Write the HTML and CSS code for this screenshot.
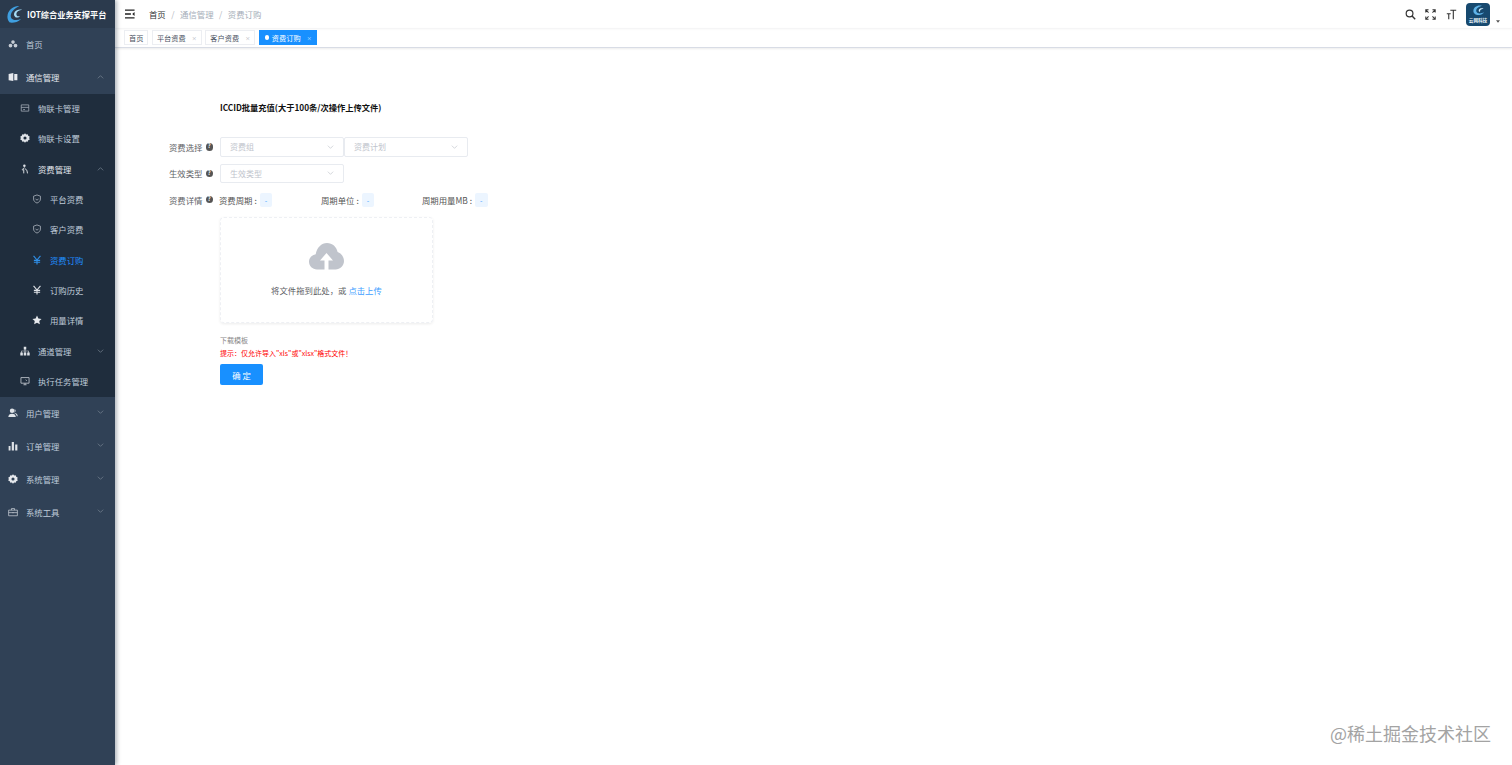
FILE: index.html
```html
<!DOCTYPE html>
<html lang="zh-CN">
<head>
  <meta charset="UTF-8" />
  <title>IOT综合业务支撑平台</title>
  <link rel="stylesheet" href="styles.css">
</head>
<body>
  <aside class="sidebar">
    <div class="brand">
      <svg class="brand-logo" viewBox="0 0 20 20" aria-hidden="true">
        <path d="M15 1.500C9.500 1 4 5 2.800 10.500c-.8 3.500.2 6.500 2.200 8.500 3.500.6 8.500-.3 12-3.800-3 1.300-6.800 1.800-9 .3C5.500 14 5.500 10.500 7.500 7.500 9.300 4.800 12 3 15 1.500z" fill="#3f9fe0"/>
        <path d="M18 5.500c-3-1-6.300.2-7.800 2.500-1.200 2-.9 4.300.8 5.300 1.700.9 3.700.3 4.800-1-1.500.4-3 .1-3.600-1.100-.7-1.600.3-3.300 1.800-4.300C15.200 6.200 16.500 5.700 18 5.500z" fill="#a5dcf7"/>
      </svg>
      <span class="brand-name">IOT综合业务支撑平台</span>
    </div>
    <nav class="menu">
      <a class="item">
        <svg class="ico" viewBox="0 0 16 16"><path d="M8 2a2.900 2.900 0 1 1 0 5.800A2.900 2.900 0 0 1 8 2zM4 7.500a3 3 0 1 1 0 6 3 3 0 0 1 0-6zm8 0a3 3 0 1 1 0 6 3 3 0 0 1 0-6z" fill="#c6ccd4"/></svg>
        <span>首页</span>
      </a>
      <a class="item strong">
        <svg class="ico" viewBox="0 0 16 16"><path d="M1 3 8.500 1.500v13L1 13zM10 3h5v10h-5z" fill="#e6e9ed"/></svg>
        <span>通信管理</span>
        <svg class="arrow" viewBox="0 0 10 6"><path d="M1 5l4-4 4 4"/></svg>
      </a>
      <div class="submenu">
        <a class="sub">
          <svg class="ico" viewBox="0 0 16 16"><path d="M2 3h12v10H2zM2 7h12M5 10.500h3" fill="none" stroke="#aab2bc" stroke-width="1.200"/></svg>
          <span>物联卡管理</span>
        </a>
        <a class="sub">
          <svg class="ico" viewBox="0 0 16 16"><path fill-rule="evenodd" d="M8 .500l1.800 2 2.500-.5.800 2.400 2.400 1L14.800 8l.7 2.600-2.400 1-.8 2.400-2.500-.5-1.800 2-1.800-2-2.500.5-.8-2.400-2.400-1L1.200 8 .500 5.400l2.400-1L3.700 2l2.500.5zM8 5.500a2.500 2.500 0 1 0 0 5 2.500 2.500 0 0 0 0-5z" fill="#dfe3e8"/></svg>
          <span>物联卡设置</span>
        </a>
        <a class="sub strong">
          <svg class="ico" viewBox="0 0 16 16"><circle cx="7" cy="2.800" r="2" fill="#dfe3e8"/><path d="M7 5.500 3.500 9l1.200 1L6 8.800V15M7.500 7l3.500 3 1 5" fill="none" stroke="#dfe3e8" stroke-width="1.500"/></svg>
          <span>资费管理</span>
          <svg class="arrow" viewBox="0 0 10 6"><path d="M1 5l4-4 4 4"/></svg>
        </a>
        <a class="sub deep">
          <svg class="ico" viewBox="0 0 16 16"><path d="M8 1.500l5.500 2v4.500c0 3-2.400 5.300-5.500 6.500-3.100-1.200-5.500-3.500-5.500-6.500V3.500zM5.500 7.500 8 10l2.500-2.500" fill="none" stroke="#b5bcc5" stroke-width="1.200"/></svg>
          <span>平台资费</span>
        </a>
        <a class="sub deep">
          <svg class="ico" viewBox="0 0 16 16"><path d="M8 1.500l5.500 2v4.500c0 3-2.400 5.300-5.500 6.500-3.100-1.200-5.500-3.500-5.500-6.500V3.500zM5.500 7.500 8 10l2.500-2.500" fill="none" stroke="#b5bcc5" stroke-width="1.200"/></svg>
          <span>客户资费</span>
        </a>
        <a class="sub deep active">
          <svg class="ico" viewBox="0 0 16 16"><path d="M2.500 1.500 8 8l5.500-6.500M3 8.500h10M3 11.500h10M8 8v7" fill="none" stroke="#2f8fe8" stroke-width="1.800"/></svg>
          <span>资费订购</span>
        </a>
        <a class="sub deep">
          <svg class="ico" viewBox="0 0 16 16"><path d="M2.500 1.500 8 8l5.500-6.500M3 8.500h10M3 11.500h10M8 8v7" fill="none" stroke="#dfe3e8" stroke-width="1.800"/></svg>
          <span>订购历史</span>
        </a>
        <a class="sub deep">
          <svg class="ico" viewBox="0 0 16 16"><path d="M8 .800l2.200 4.700 5.100.7-3.700 3.500 1 5.100L8 12.300l-4.600 2.500 1-5.100L.700 6.200l5.100-.7z" fill="#e6e9ed"/></svg>
          <span>用量详情</span>
        </a>
        <a class="sub">
          <svg class="ico" viewBox="0 0 16 16"><path d="M6 1h4v4.500H8.600v2H14v3h1.500V15h-4v-4.500H13v-2H8.600v2H10V15H6v-4.500h1.400v-2H3v2h1.500V15h-4v-4.500H2v-3h5.400v-2H6z" fill="#dfe3e8"/></svg>
          <span>通道管理</span>
          <svg class="arrow" viewBox="0 0 10 6"><path d="M1 1l4 4 4-4"/></svg>
        </a>
        <a class="sub">
          <svg class="ico" viewBox="0 0 16 16"><path d="M1.500 2.500h13v9h-13zM5.500 14h5M8 11.500V14M9 6l2 1.500" fill="none" stroke="#c6ccd4" stroke-width="1.300"/></svg>
          <span>执行任务管理</span>
        </a>
      </div>
      <a class="item">
        <svg class="ico" viewBox="0 0 16 16"><circle cx="6.500" cy="4.500" r="3.600" fill="#dfe3e8"/><path d="M.500 14.500c0-3.800 2.500-5.500 6-5.500s6 1.700 6 5.500zM10.500 1.500a3.500 3.500 0 0 1 0 6c2.500.6 5 2.200 5 5.500H14c-.3-2-1.500-3.500-3.500-4.500z" fill="#dfe3e8"/></svg>
        <span>用户管理</span>
        <svg class="arrow" viewBox="0 0 10 6"><path d="M1 1l4 4 4-4"/></svg>
      </a>
      <a class="item">
        <svg class="ico" viewBox="0 0 16 16"><path d="M1 8h3v7H1zM6 1.500h3.500V15H6zM11.500 5.500H15V15h-3.500z" fill="#dfe3e8"/></svg>
        <span>订单管理</span>
        <svg class="arrow" viewBox="0 0 10 6"><path d="M1 1l4 4 4-4"/></svg>
      </a>
      <a class="item">
        <svg class="ico" viewBox="0 0 16 16"><path fill-rule="evenodd" d="M8 .500l1.800 2 2.500-.5.800 2.400 2.400 1L14.800 8l.7 2.600-2.400 1-.8 2.400-2.500-.5-1.800 2-1.800-2-2.500.5-.8-2.400-2.400-1L1.200 8 .500 5.400l2.400-1L3.700 2l2.500.5zM8 5.500a2.500 2.500 0 1 0 0 5 2.500 2.500 0 0 0 0-5z" fill="#e6e9ed"/></svg>
        <span>系统管理</span>
        <svg class="arrow" viewBox="0 0 10 6"><path d="M1 1l4 4 4-4"/></svg>
      </a>
      <a class="item">
        <svg class="ico" viewBox="0 0 16 16"><path d="M1 5h14v9H1zM5.500 5V2.500h5V5M1 9h14M8 8v2" fill="none" stroke="#c6ccd4" stroke-width="1.200"/></svg>
        <span>系统工具</span>
        <svg class="arrow" viewBox="0 0 10 6"><path d="M1 1l4 4 4-4"/></svg>
      </a>
    </nav>
  </aside>

  <div class="main">
    <header class="navbar">
      <svg class="hamburger" viewBox="0 0 11 10"><path d="M0 .8h10.500M0 5h6.500M0 9.200h10.500" fill="none" stroke="#222" stroke-width="1.400"/><path d="M10.500 2.800v4.400L8 5z" fill="#222"/></svg>
      <div class="crumbs">
        <span class="crumb-home">首页</span>
        <span class="sep">/</span>
        <span>通信管理</span>
        <span class="sep">/</span>
        <span>资费订购</span>
      </div>
      <div class="tools">
        <svg class="tool" viewBox="0 0 14 14"><circle cx="5.800" cy="5.800" r="4.300" fill="none" stroke="#333" stroke-width="1.500"/><path d="M9 9l4 4" stroke="#333" stroke-width="1.800"/></svg>
        <svg class="tool" viewBox="0 0 14 14"><path d="M1 4.500V1h3.500M9.500 1H13v3.500M13 9.500V13H9.500M4.500 13H1V9.500M1.500 1.500l3 3M12.500 1.500l-3 3M12.500 12.500l-3-3M1.500 12.500l3-3" fill="none" stroke="#333" stroke-width="1.300"/></svg>
        <svg class="tool" viewBox="0 0 14 14"><path d="M5.500 1.500H13M9.300 1.500V13M1 6h5M3.500 6v7" fill="none" stroke="#333" stroke-width="1.400"/></svg>
        <div class="avatar">
          <svg class="avatar-swirl" viewBox="0 0 20 14"><path d="M14 1.500C9 0 4 3 4 7.500c0 3.500 4 5.500 8 4.500 2-.5 3.500-1.500 4.500-3-2.500 1.500-6 2-8 .5C6.500 8 7 5 9.500 3.500 11 2.500 12.500 2 14 1.500z" fill="#5fb4ea"/><path d="M16 5c-2-1-4.500-.5-5.500 1-.7 1.200 0 2.500 1.500 2.500-.5-1 0-2 1-2.700.8-.5 2-.8 3-.8z" fill="#cfeaf9"/></svg>
          <span class="avatar-name">云网科技</span>
        </div>
        <svg class="caret" viewBox="0 0 6 4"><path d="M0 0h6L3 4z" fill="#555"/></svg>
      </div>
    </header>

    <div class="tabs">
      <a class="tab">首页</a>
      <a class="tab">平台资费<i>×</i></a>
      <a class="tab">客户资费<i>×</i></a>
      <a class="tab current"><b class="dot"></b>资费订购<i>×</i></a>
    </div>

    <main class="content">
      <h3 class="title">ICCID批量充值(大于100条/次操作上传文件)</h3>

      <div class="row">
        <label class="row-label">资费选择<b class="help">?</b></label>
        <div class="select"><span>资费组</span><svg viewBox="0 0 10 6"><path d="M1 1l4 4 4-4"/></svg></div>
        <div class="select"><span>资费计划</span><svg viewBox="0 0 10 6"><path d="M1 1l4 4 4-4"/></svg></div>
      </div>
      <div class="row row-last">
        <label class="row-label">生效类型<b class="help">?</b></label>
        <div class="select"><span>生效类型</span><svg viewBox="0 0 10 6"><path d="M1 1l4 4 4-4"/></svg></div>
      </div>
      <div class="row row-detail">
        <label class="row-label">资费详情<b class="help">?</b></label>
        <div class="detail detail-a"><span>资费周期 :</span><em>-</em></div>
        <div class="detail detail-b"><span>周期单位 :</span><em>-</em></div>
        <div class="detail"><span>周期用量MB :</span><em>-</em></div>
      </div>

      <div class="upload">
        <svg class="cloud" viewBox="0 0 35 27"><path d="M8 26.500C3.500 26.500 0 23 0 18.800c0-3.900 2.900-7 6.700-7.600C7.700 4.800 12.500 0 18 0c5.300 0 9.700 3.900 10.600 9 3.700 1.200 6.400 5 6.400 9 0 4.800-3.800 8.500-8.500 8.500h-7V17.500h4.500L17.500 10 11 17.500h4.500v9z" fill="#c0c4cc"/></svg>
        <p class="upload-text">将文件拖到此处，或 <a>点击上传</a></p>
      </div>

      <a class="template">下载模板</a>
      <p class="hint">提示：仅允许导入"xls"或"xlsx"格式文件！</p>
      <button class="confirm" type="button">确 定</button>
    </main>
  </div>

  <div class="watermark">@稀土掘金技术社区</div>
</body>
</html>
```

FILE: styles.css
```css
* {
  box-sizing: border-box;
}
html, body {
  height: 100%;
}
body {
  margin: 0;
  display: flex;
  overflow: hidden;
  background: #fff;
  font-family: "Noto Sans CJK SC", "Noto Sans", sans-serif;
  font-size: 8.4px;
  color: #606266;
}

/* sidebar */
.sidebar {
  width: 115px;
  flex-shrink: 0;
  background: #304156;
  box-shadow: 2px 0 4px rgba(0, 21, 41, 0.3);
  position: relative;
  z-index: 2;
  color: #bfcbd9;
}
.brand {
  height: 28px;
  display: flex;
  align-items: center;
  padding-left: 5px;
  gap: 3px;
  background: #2b3a4d;
}
.brand-logo {
  width: 19px;
  height: 20px;
  flex-shrink: 0;
}
.brand-name {
  color: #fff;
  font-size: 8.200px;
  font-weight: 700;
  white-space: nowrap;
}
.item, .sub {
  display: flex;
  align-items: center;
  position: relative;
  white-space: nowrap;
}
.item {
  height: 33px;
  padding: 0 0 1px 8px;
}
.sub {
  height: 30.3px;
  padding: 0 0 2px 20px;
}
.sub.deep {
  padding-left: 32px;
}
.item span, .sub span {
  margin-left: 8px;
}
.strong {
  color: #e4e8ed;
}
.active {
  color: #1f8fff;
}
.submenu {
  background: #1f2d3d;
}
.ico {
  width: 10px;
  height: 10px;
  flex-shrink: 0;
}
.arrow {
  position: absolute;
  right: 11px;
  top: 50%;
  width: 7px;
  height: 4px;
  margin-top: -3px;
  fill: none;
  stroke: #7f8b99;
  stroke-width: 1;
}

/* top bar */
.main {
  flex: 1;
  min-width: 0;
  display: flex;
  flex-direction: column;
}
.navbar {
  height: 28px;
  display: flex;
  align-items: center;
  padding-left: 10px;
  box-shadow: 0 1px 2px rgba(0, 21, 41, 0.06);
}
.hamburger {
  width: 10px;
  height: 10px;
}
.crumbs {
  margin-left: 14px;
  display: flex;
  gap: 5.500px;
  color: #a5adb8;
  font-size: 8.400px;
}
.crumb-home {
  color: #303133;
}
.sep {
  color: #b4b9c2;
}
.tools {
  margin-left: auto;
  display: flex;
  align-items: center;
  padding-right: 12px;
}
.tool {
  width: 11px;
  height: 11px;
  margin-right: 9.500px;
}
.avatar {
  width: 24px;
  height: 23px;
  border-radius: 4px;
  background: #17496f;
  display: flex;
  flex-direction: column;
  align-items: center;
}
.avatar-swirl {
  width: 17px;
  height: 13px;
  margin-top: 1px;
}
.avatar-name {
  font-size: 4.600px;
  line-height: 6px;
  color: #e8f1f7;
  font-weight: 700;
}
.caret {
  width: 4px;
  height: 3px;
  margin: 14px 0 0 6px;
}

/* tabs */
.tabs {
  height: 20px;
  display: flex;
  gap: 3.500px;
  padding: 2px 0 0 9px;
  border-bottom: 1px solid #d8dce5;
  box-shadow: 0 1px 2px rgba(0, 0, 0, 0.08);
}
.tab {
  height: 15px;
  padding: 0 4px;
  display: flex;
  align-items: center;
  border: 1px solid #eceef2;
  background: #fff;
  color: #495060;
  font-size: 7.200px;
}
.tab i {
  margin-left: 6.200px;
  font-style: normal;
  font-size: 5px;
  color: #a0a6b0;
}
.tab.current {
  background: #1890ff;
  border-color: #1890ff;
  color: #fff;
  padding-left: 5px;
}
.tab.current i {
  color: #dcecff;
}
.dot {
  width: 4.500px;
  height: 4.500px;
  margin-right: 2.500px;
  border-radius: 50%;
  background: #fff;
}

/* form */
.content {
  padding: 53px 0 0 105px;
}
.title {
  margin: 0 0 24px;
  font-size: 8.250px;
  line-height: 12px;
  font-weight: 700;
  color: #111;
}
.row {
  display: flex;
  align-items: center;
  margin-bottom: 7px;
}
.row-last {
  margin-bottom: 9px;
}
.row-label {
  width: 105px;
  margin-left: -105px;
  padding-right: 7px;
  flex-shrink: 0;
  display: flex;
  justify-content: flex-end;
  align-items: center;
  color: #606266;
  font-size: 8.400px;
}
.help {
  width: 7.500px;
  height: 7.500px;
  margin-left: 3px;
  border-radius: 50%;
  background: #555;
  color: #fff;
  font-size: 5.500px;
  line-height: 7.500px;
  text-align: center;
}
.select {
  width: 124px;
  height: 19.500px;
  padding: 0 9px;
  display: flex;
  align-items: center;
  justify-content: space-between;
  border: 1px solid #e8ebf0;
  border-radius: 2px;
  color: #c0c4cc;
  font-size: 8px;
}
.select svg {
  width: 7px;
  height: 4px;
  fill: none;
  stroke: #c0c4cc;
  stroke-width: 1;
}
.row-detail {
  margin-bottom: 10px;
  height: 15px;
}
.detail {
  display: flex;
  align-items: center;
  color: #555;
  white-space: nowrap;
}
.detail-a {
  width: 102px;
  margin-left: -1px;
}
.detail-b {
  width: 101px;
}
.detail em {
  width: 12.500px;
  height: 14px;
  margin-left: 3px;
  border-radius: 2px;
  background: #ecf5ff;
  color: #409eff;
  font-style: normal;
  font-size: 7px;
  line-height: 14px;
  text-align: center;
}
.upload {
  width: 213px;
  height: 106px;
  border: 1px dashed #eef0f4;
  border-radius: 4px;
  box-shadow: 0 1px 3px rgba(0, 0, 0, 0.08);
  display: flex;
  flex-direction: column;
  align-items: center;
}
.cloud {
  width: 35px;
  height: 27px;
  margin-top: 25px;
}
.upload-text {
  margin: 14px 0 0;
  font-size: 8.400px;
  color: #606266;
}
.upload-text a {
  color: #409eff;
}
.template {
  display: block;
  margin-top: 12px;
  font-size: 7px;
  line-height: 10px;
  color: #888;
}
.hint {
  margin: 3px 0 0;
  font-size: 7px;
  line-height: 10px;
  color: #f00;
}
.confirm {
  display: block;
  width: 43px;
  height: 21px;
  margin-top: 6px;
  padding: 0;
  border: none;
  border-radius: 2px;
  background: #1890ff;
  color: #fff;
  font-family: inherit;
  font-size: 8.400px;
}

.watermark {
  position: absolute;
  right: 21px;
  bottom: 18px;
  font-size: 18px;
  line-height: 28px;
  color: #a3a3a3;
}
```
